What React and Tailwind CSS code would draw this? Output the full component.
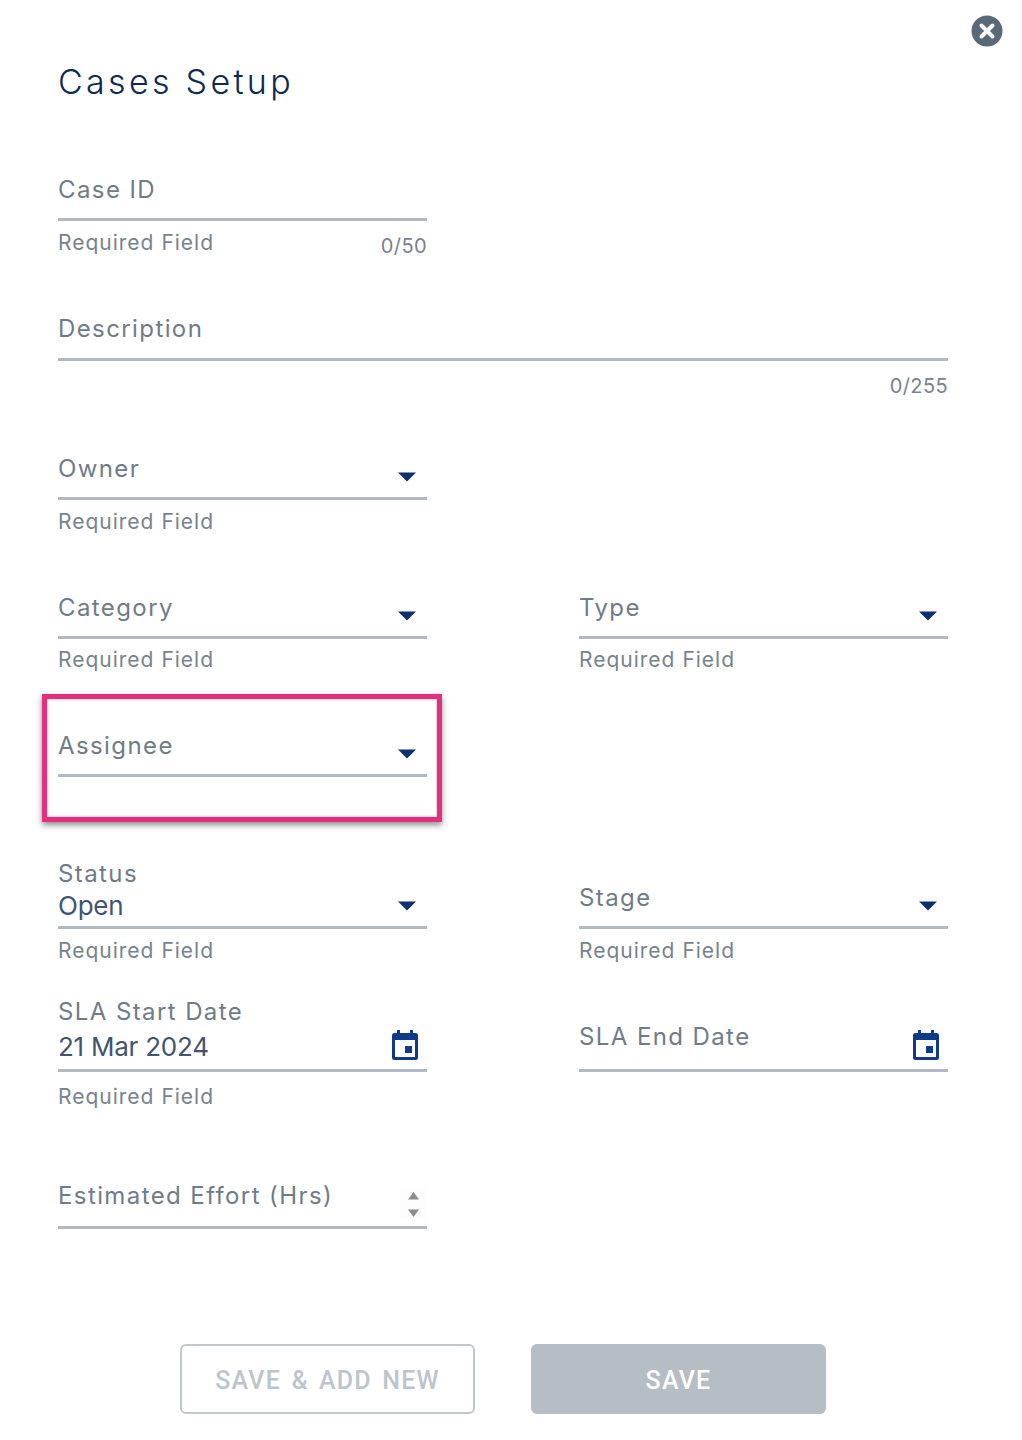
import React from "react";

const FONT = "font-['Inter','Noto_Sans',sans-serif]";

function Caret() {
  return (
    <svg width="18" height="10" viewBox="0 0 18 10" className="absolute right-[11px] bottom-[15px]">
      <path d="M0 0.5H18L9 9.5Z" fill="#0f2f70" />
    </svg>
  );
}

function CalendarIcon() {
  return (
    <svg width="28" height="32" viewBox="0 0 28 32" className="absolute right-[8px] bottom-[8px]">
      <path
        fillRule="evenodd"
        clipRule="evenodd"
        d="M6 1h3v3h10V1h3v3h2.5A2.5 2.5 0 0 1 27 6.5v22a2.5 2.5 0 0 1-2.5 2.5h-21A2.5 2.5 0 0 1 1 28.5v-22A2.5 2.5 0 0 1 3.5 4H6V1ZM4 11v17h20V11H4Z"
        fill="#0f3a8a"
      />
      <rect x="14" y="17" width="7" height="7" fill="#0f3a8a" />
    </svg>
  );
}

function Spinner() {
  return (
    <svg width="27" height="32" viewBox="0 0 27 32" className="absolute right-0 bottom-[7px] bg-[#fdfdfd]">
      <path d="M13.5 5L19 12.5H8Z" fill="#8c8c8c" />
      <path d="M13.5 30L19 22.5H8Z" fill="#8c8c8c" />
    </svg>
  );
}

function Field({ label, value, helper, counter, icon, pad = "pb-[10px]", gap = "mb-[3px]", helperPad = "pt-[9px]", children }) {
  return (
    <div className="relative">
      <div className={`relative flex h-[72px] flex-col justify-end border-b-[3px] border-[#b0bac5] ${pad}`}>
        <div className={`text-[24px] leading-[30px] tracking-[1.4px] text-[#6e7c89] ${gap}`}>{label}</div>
        {value && <div className="-mb-[5px] text-[26px] leading-[34px] tracking-[-0.25px] text-[#3f5570]">{value}</div>}
        {icon === "caret" && <Caret />}
        {icon === "calendar" && <CalendarIcon />}
        {icon === "spinner" && <Spinner />}
      </div>
      <div className={`flex h-[46px] items-start justify-between ${helperPad}`}>
        <span className="text-[21px] leading-[26px] tracking-[1px] text-[#76838f]">{helper}</span>
        {counter && <span className="mt-[3px] text-[20px] leading-[26px] tracking-[0.4px] text-[#76838f]">{counter}</span>}
      </div>
      {children}
    </div>
  );
}

function Row({ className, children }) {
  return <div className={`grid grid-cols-[369px_369px] gap-x-[152px] ${className}`}>{children}</div>;
}

export default function App() {
  return (
    <div className={`relative h-[1440px] w-[1022px] bg-white pl-[58px] ${FONT}`}>
      <button className="absolute right-[19px] top-[15px]" aria-label="Close">
        <svg width="32" height="32" viewBox="0 0 32 32">
          <circle cx="16" cy="16" r="15.5" fill="#58697a" />
          <path d="M10.5 10.5L21.5 21.5M21.5 10.5L10.5 21.5" stroke="#fff" strokeWidth="4" strokeLinecap="round" />
        </svg>
      </button>

      <h1 className="h-[149px] pt-[60px] text-[34px] font-light leading-[44px] tracking-[3.3px] text-[#0d2a52]">Cases Setup</h1>

      <Row className="h-[140px]">
        <Field label="Case ID" helper="Required Field" counter="0/50" />
      </Row>
      <div className="h-[139px] w-[890px]">
        <Field label="Description" counter="0/255" pad="pb-[11px]" />
      </div>
      <Row className="h-[139px]">
        <Field label="Owner" helper="Required Field" icon="caret" />
      </Row>
      <Row className="h-[138px]">
        <Field label="Category" helper="Required Field" icon="caret" helperPad="pt-[8px]" />
        <Field label="Type" helper="Required Field" icon="caret" helperPad="pt-[8px]" />
      </Row>
      <Row className="h-[152px]">
        <Field label="Assignee" icon="caret">
          <div className="absolute -left-[16px] top-[-11px] h-[128px] w-[400px] border-[5px] border-[#e2307f] shadow-[0_3px_6px_rgba(0,0,0,0.45),inset_0_0_3px_rgba(0,0,0,0.35)]" />
        </Field>
      </Row>
      <Row className="h-[143px]">
        <Field label="Status" value="Open" helper="Required Field" icon="caret" pad="pb-[8px]" gap="mb-0" />
        <Field label="Stage" helper="Required Field" icon="caret" />
      </Row>
      <Row className="h-[157px]">
        <Field label="SLA Start Date" value="21 Mar 2024" helper="Required Field" icon="calendar" helperPad="pt-[12px]" />
        <Field label="SLA End Date" icon="calendar" pad="pb-[14px]" />
      </Row>
      <Row className="h-[187px]">
        <Field label="Estimated Effort (Hrs)" icon="spinner" pad="pb-[12px]" />
      </Row>

      <div className="flex w-[890px] justify-center gap-[56px] font-['Roboto',sans-serif]">
        <button className="h-[70px] w-[295px] rounded-[6px] border-2 border-[#c0c8cf] bg-white pt-[3px] text-[25px] font-medium tracking-[1.2px] text-[#bcc5cd] [word-spacing:3px]">
          SAVE &amp; ADD NEW
        </button>
        <button className="h-[70px] w-[295px] rounded-[6px] bg-[#b5bdc5] pt-[3px] text-[25px] font-medium tracking-[1.2px] text-white">
          SAVE
        </button>
      </div>
    </div>
  );
}
